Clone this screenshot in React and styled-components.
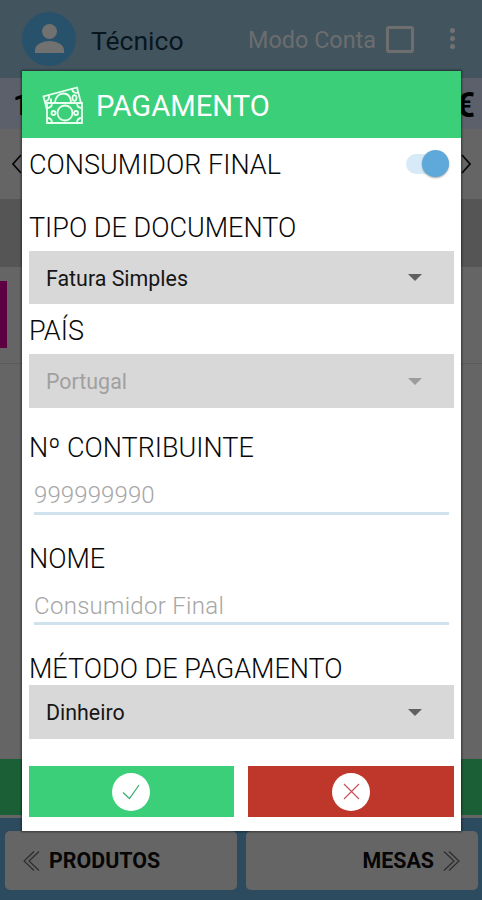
import { useState } from "react"
import styled, { createGlobalStyle } from "styled-components"

const GlobalStyle = createGlobalStyle`
    *{
        box-sizing: border-box;
    }
    body{
        margin: 0;
        background-color: #666;
        font-family: Roboto, "Liberation Sans", sans-serif;
        overflow: hidden;
    }
    svg{
        display: block;
        flex: none;
    }
`

const Screen = styled.div`
    position: relative;
    display: flex;
    flex-direction: column;
    width: 482px;
    height: 900px;
    overflow: hidden;
    background-color: #656565;
`

const TopBar = styled.header`
    display: flex;
    align-items: center;
    height: 78px;
    padding: 0 27px 0 22px;
    background-color: #42545e;
`

const UserName = styled.span`
    flex: 1;
    margin: 2px 0 0 15px;
    font-size: 26.5px;
    color: #09161e;
`

const ModeLabel = styled.span`
    font-size: 23.4px;
    color: #6c6d6f;
    margin: 2px 10px 0 0;
`

const CheckBox = styled.span`
    width: 28px;
    height: 27px;
    border: 3px solid #6f6e6e;
    border-radius: 3px;
    margin-right: 36px;
`

const Dots = styled.div`
    display: flex;
    flex-direction: column;
    gap: 3px;
    margin-top: -2px;
    span{
        width: 5px;
        height: 5px;
        border-radius: 50%;
        background-color: #737272;
    }
`

const TotalRow = styled.div`
    display: flex;
    align-items: center;
    justify-content: space-between;
    height: 51px;
    padding: 3px 7px 0 13px;
    background-color: #5b606b;
    color: #000;
    font-size: 29px;
    font-weight: 700;
    .currency{
        font-size: 35px;
    }
`

const CategoryRow = styled.div`
    display: flex;
    align-items: center;
    justify-content: space-between;
    height: 70px;
    padding: 0 11px;
    background-color: #656565;
`

const TitleStrip = styled.div`
    height: 68px;
    background-color: #555;
`

const ProductRow = styled.div`
    height: 97px;
    padding-top: 14px;
    border-bottom: 1px solid #5a5a5a;
    .tag{
        width: 7px;
        height: 67px;
        background-color: #5d0041;
    }
`

const GreenStrip = styled.div`
    height: 56px;
    margin-top: auto;
    background-color: #1b5f36;
`

const BottomBar = styled.nav`
    display: flex;
    gap: 9px;
    height: 82px;
    margin-top: 3px;
    padding: 13px 4px 10px 5px;
    background-color: #2c4b5e;
`

const NavButton = styled.div`
    flex: 1;
    display: flex;
    align-items: center;
    justify-content: ${({ $right }) => ($right ? "flex-end" : "flex-start")};
    gap: 9px;
    padding: 0 18px;
    border-radius: 5px;
    background-color: #656565;
    color: #060606;
    font-size: 21.4px;
    font-weight: 700;
`

const Dialog = styled.section`
    position: absolute;
    left: 22px;
    top: 71px;
    width: 439px;
    height: 760px;
    background-color: #fff;
    box-shadow: 0 0 2px 1px rgba(0, 0, 0, 0.45);
`

const DialogTitle = styled.h1`
    display: flex;
    align-items: center;
    gap: 11px;
    height: 67px;
    margin: 0;
    padding: 2px 0 0 20px;
    background-color: #3acf78;
    color: #fff;
    font-size: 29.2px;
    font-weight: 400;
    svg{
        margin-top: -2px;
    }
`

const DialogBody = styled.div`
    padding: 11px 7px 0 6.5px;
`

const SwitchRow = styled.div`
    display: flex;
    justify-content: space-between;
    padding-right: 5px;
`

const Label = styled.div`
    height: 32px;
    line-height: 32px;
    margin-top: ${({ $top }) => $top || 0}px;
    padding-left: 0.5px;
    color: #080808;
    font-size: 27px;
    font-weight: 300;
    white-space: nowrap;
`

const Track = styled.button`
    width: 43px;
    height: 20px;
    margin-top: 5px;
    padding: 0;
    border: 0;
    border-radius: 10px;
    background-color: #d7eaf7;
`

const Thumb = styled.span`
    display: block;
    width: 27px;
    height: 27px;
    margin: -4px 0 0 ${({ $on }) => ($on ? 16 : 0)}px;
    border-radius: 50%;
    background-color: #5ea9d9;
    box-shadow: 0 1px 2px rgba(0, 0, 0, 0.35);
`

const Select = styled.div`
    display: flex;
    align-items: center;
    justify-content: space-between;
    height: ${({ $height }) => $height || 54}px;
    margin-top: ${({ $top }) => $top || 0}px;
    padding: 1px 32px 0 17.5px;
    background-color: #d8d8d8;
    color: ${({ $disabled }) => ($disabled ? "#a0a0a0" : "#161616")};
    font-size: 21.4px;
    .arrow{
        margin-top: -1px;
        border: 7px solid transparent;
        border-top-color: ${({ $disabled }) => ($disabled ? "#9c9c9c" : "#606060")};
        border-bottom: 0;
    }
`

const Field = styled.div`
    height: ${({ $height }) => $height}px;
    margin: 0 5px 0 5.5px;
    padding-top: 17px;
    border-bottom: 3px solid #d0e2ee;
    color: #a6a6a6;
    font-size: 24px;
    font-weight: 300;
    line-height: 28px;
    letter-spacing: ${({ $spacing }) => $spacing || 0}px;
`

const Actions = styled.div`
    display: flex;
    gap: 14px;
    margin-top: 27px;
`

const ActionButton = styled.button`
    flex: 1;
    display: flex;
    align-items: center;
    justify-content: center;
    height: 51px;
    padding: 0;
    border: 0;
    background-color: ${({ $color }) => $color};
    .circle{
        display: flex;
        align-items: center;
        justify-content: center;
        width: 38px;
        height: 38px;
        border-radius: 50%;
        background-color: #fff;
    }
`

const Avatar = () => (
    <svg width="54" height="54" viewBox="0 0 54 54">
        <circle cx="27" cy="27" r="27" fill="#28526b" />
        <circle cx="27.500" cy="19.500" r="7.500" fill="#717171" />
        <path d="M13 41v-3c0-6 9-9 14.500-9s14.500 3 14.500 9v3z" fill="#717171" />
    </svg>
)

const MoneyIcon = () => (
    <svg width="43" height="38" viewBox="0 0 43 38" fill="none" stroke="#e9fff0" strokeWidth="1.800">
        <path d="M5 24 1.500 10.500 35 1.500 39 17" />
        <path d="M3 15.500c3-.5 4.500-3 4-6.500M30 3c.5 3 3 4.500 6 3.500" />
        <path d="M13 16c.5-5 4-8.500 8.500-8.500 4 0 7 3 7.500 8.500" />
        <ellipse cx="32.500" cy="12" rx="2" ry="2.800" />
        <path d="M9 12.500v3.500" />
        <path d="M5 17h35v20H5z" />
        <circle cx="23" cy="27" r="7.500" />
        <circle cx="11.500" cy="27" r="2" />
        <circle cx="34" cy="27" r="2" />
        <path d="M5 22c3 0 5-2 5-5M40 22c-3 0-5-2-5-5M5 32c3 0 5 2 5 5M40 32c-3 0-5 2-5 5" />
    </svg>
)

const Chevron = ({ right }) => (
    <svg width="10" height="20" viewBox="0 0 10 20" fill="none" stroke="#080808" strokeWidth="1.800">
        <path d={right ? "M1 1l8 9-8 9" : "M10 1l-8 9 8 9"} />
    </svg>
)

const DoubleChevron = ({ right }) => (
    <svg width="17" height="20" viewBox="0 0 17 20" fill="none" stroke="#2b2b2b" strokeWidth="1.100">
        <path d={right ? "M6 .5l10 9.500L6 19.500M1 .5l10 9.500L1 19.500" : "M11 .5 1 10l10 9.500M16 .5 6 10l10 9.500"} />
    </svg>
)

const App = () => {
    const [finalConsumer, setFinalConsumer] = useState(true)

    return (
        <>
            <GlobalStyle />
            <Screen>
                <TopBar>
                    <Avatar />
                    <UserName>Técnico</UserName>
                    <ModeLabel>Modo Conta</ModeLabel>
                    <CheckBox />
                    <Dots><span /><span /><span /></Dots>
                </TopBar>
                <TotalRow>
                    <span>1</span>
                    <span className="currency">€</span>
                </TotalRow>
                <CategoryRow>
                    <Chevron />
                    <Chevron right />
                </CategoryRow>
                <TitleStrip />
                <ProductRow>
                    <div className="tag" />
                </ProductRow>
                <GreenStrip />
                <BottomBar>
                    <NavButton>
                        <DoubleChevron />
                        PRODUTOS
                    </NavButton>
                    <NavButton $right>
                        MESAS
                        <DoubleChevron right />
                    </NavButton>
                </BottomBar>

                <Dialog>
                    <DialogTitle>
                        <MoneyIcon />
                        PAGAMENTO
                    </DialogTitle>
                    <DialogBody>
                        <SwitchRow>
                            <Label>CONSUMIDOR FINAL</Label>
                            <Track onClick={() => setFinalConsumer(!finalConsumer)}>
                                <Thumb $on={finalConsumer} />
                            </Track>
                        </SwitchRow>
                        <Label $top={31}>TIPO DE DOCUMENTO</Label>
                        <Select $top={7} $height={53}>
                            Fatura Simples
                            <span className="arrow" />
                        </Select>
                        <Label $top={11}>PAÍS</Label>
                        <Select $top={7} $disabled>
                            Portugal
                            <span className="arrow" />
                        </Select>
                        <Label $top={24}>Nº CONTRIBUINTE</Label>
                        <Field $height={51} $spacing={0.1}>999999990</Field>
                        <Label $top={28}>NOME</Label>
                        <Field $height={50} $spacing={0.3}>Consumidor Final</Field>
                        <Label $top={28}>MÉTODO DE PAGAMENTO</Label>
                        <Select $top={0}>
                            Dinheiro
                            <span className="arrow" />
                        </Select>
                        <Actions>
                            <ActionButton $color="#3acf78">
                                <span className="circle">
                                    <svg width="18" height="16" viewBox="0 0 18 16" fill="none" stroke="#3fae72" strokeWidth="1.300">
                                        <path d="M1 8.500l6.500 6L17 1" />
                                    </svg>
                                </span>
                            </ActionButton>
                            <ActionButton $color="#bf372a">
                                <span className="circle">
                                    <svg width="17" height="17" viewBox="0 0 17 17" fill="none" stroke="#c4575a" strokeWidth="1.300">
                                        <path d="M1 1l15 15M16 1 1 16" />
                                    </svg>
                                </span>
                            </ActionButton>
                        </Actions>
                    </DialogBody>
                </Dialog>
            </Screen>
        </>
    )
}

export default App
